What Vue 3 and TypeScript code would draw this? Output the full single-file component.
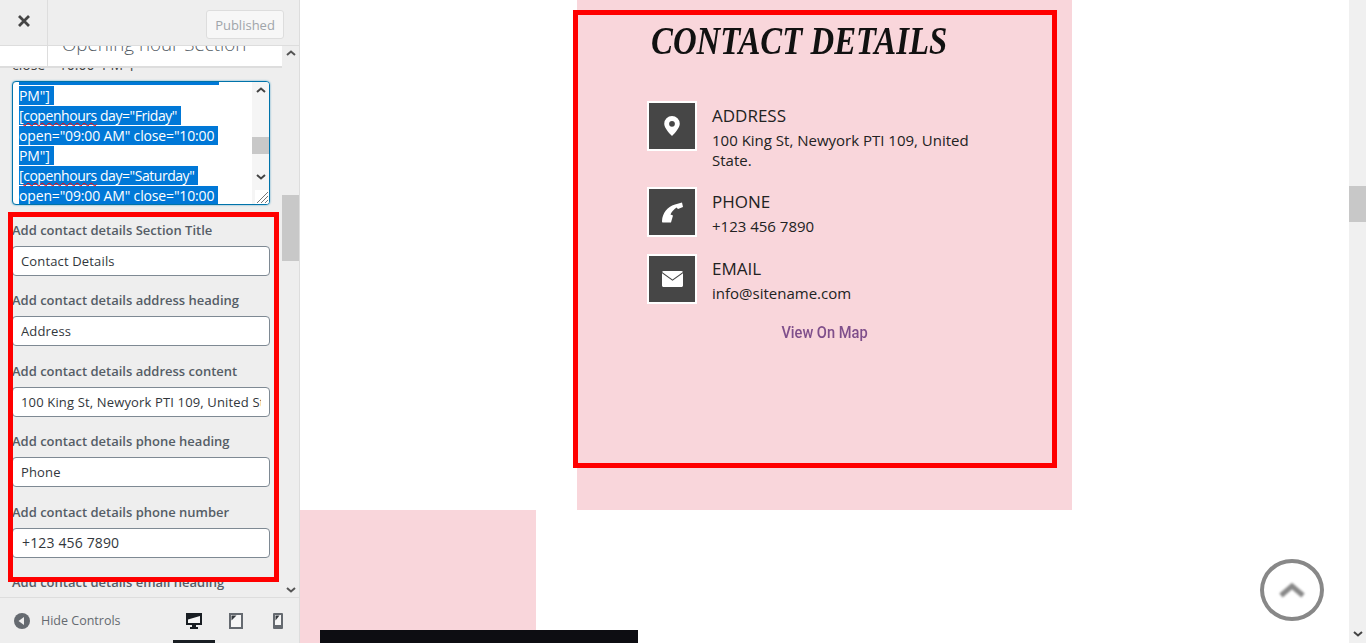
<template>
  <div class="page">
    <aside class="sidebar">
      <header class="side-head">
        <button class="close-btn" aria-label="Close">
          <svg width="12" height="12" viewBox="0 0 12 12"><path d="M1 1l10 10M11 1L1 11" stroke="#444" stroke-width="2.8" /></svg>
        </button>
        <span class="published">Published</span>
      </header>

      <div class="side-body">
        <div class="side-scroll">
          <div class="section-strip">
            <div class="strip-back"></div>
            <div class="strip-title"><span>Opening hour Section</span></div>
          </div>
          <div class="cut-line"><span>close="10:00 PM"]</span></div>

          <div class="code-box">
            <div class="code-text">
              <div class="code-inner">
                <span class="sel" :class="{ tagged: line.tag }" v-for="(line, i) in codeLines" :key="i"><template v-if="line.tag">[<u>copenhours</u></template>{{ line.text }}</span>
              </div>
            </div>
            <div class="code-bar">
              <svg class="arrow up" width="10" height="6" viewBox="0 0 10 6"><path d="M1 5l4-3.5L9 5" fill="none" stroke="#444" stroke-width="2" /></svg>
              <div class="code-thumb"></div>
              <svg class="arrow dn" width="10" height="6" viewBox="0 0 10 6"><path d="M1 1l4 3.5L9 1" fill="none" stroke="#444" stroke-width="2" /></svg>
            </div>
            <svg class="grip" width="14" height="14" viewBox="0 0 14 14"><path d="M13 2L2 13M13 6l-7 7M13 10l-3 3" stroke="#777" stroke-width="1" /></svg>
          </div>

          <div class="field" v-for="f in fields" :key="f.label">
            <label>{{ f.label }}</label>
            <div v-if="f.value" class="fake-input" :class="{ number: f.number }"><span>{{ f.value }}</span></div>
          </div>
        </div>

        <div class="side-bar">
          <svg width="10" height="6" viewBox="0 0 10 6"><path d="M1 5l4-3.5L9 5" fill="none" stroke="#555" stroke-width="2" /></svg>
          <div class="side-thumb"></div>
          <svg class="bar-down" width="10" height="6" viewBox="0 0 10 6"><path d="M1 1l4 3.5L9 1" fill="none" stroke="#555" stroke-width="2" /></svg>
        </div>
      </div>

      <footer class="side-foot">
        <svg width="16" height="16" viewBox="0 0 16 16"><circle cx="8" cy="8" r="8" fill="#656a70" /><path d="M10 4v8L4.500 8z" fill="#eee" /></svg>
        <span class="hide-text">Hide Controls</span>
        <div class="devices">
          <div class="device active">
            <svg width="16" height="16" viewBox="0 0 16 16"><path d="M0 0h16v12h-6v2h2v2H4v-2h2v-2H0z" fill="#191e23" /><path d="M2 10V6.500L14 3v7z" fill="#f6f6f6" /></svg>
          </div>
          <div class="device">
            <svg width="14" height="16" viewBox="0 0 14 16"><rect x="1" y="1" width="12" height="14" fill="#f6f6f6" stroke="#656a70" stroke-width="2" /><path d="M2.500 2.500h5l-5 5z" fill="#32373c" /></svg>
          </div>
          <div class="device">
            <svg width="10" height="16" viewBox="0 0 10 16"><rect width="10" height="16" rx="1" fill="#656a70" /><rect x="2" y="2" width="6" height="10" fill="#f6f6f6" /><path d="M2.500 2.500h4l-4 5z" fill="#32373c" /></svg>
          </div>
        </div>
        <div class="device-mark"></div>
      </footer>
    </aside>

    <main class="preview">
      <div class="preview-content">
        <section class="contact">
          <h2>CONTACT DETAILS</h2>
          <div class="item" v-for="c in contacts" :key="c.head">
            <div class="icon-box">
              <svg v-if="c.icon === 'pin'" width="16" height="20" viewBox="0 0 14 18"><path fill-rule="evenodd" d="M7 0a7 7 0 0 1 7 7c0 3.600-4.400 8.400-7 11-2.600-2.600-7-7.400-7-11a7 7 0 0 1 7-7zm0 4.400a2.600 2.600 0 1 0 0 5.200 2.600 2.600 0 0 0 0-5.200z" fill="#fff" /></svg>
              <svg v-else-if="c.icon === 'phone'" width="21" height="21" viewBox="0 0 21 21"><path d="M13 2.500L20 .5 21 5l-5 2-1.500-1.500C12 7 9.500 10 8.500 12.500l2.500 1-2 7H1C.3 20.500 0 20 0 19 .5 11 5 5 13 2.500z" fill="#fff" /></svg>
              <svg v-else width="21" height="16" viewBox="0 0 21 16"><path d="M1.500 0h18c.7 0 1.200.4 1.400 1L10.500 8.500.1 1C.3.400.8 0 1.500 0z" fill="#fff" /><path d="M0 2.200l10.500 7.500L21 2.200V14.500c0 .8-.7 1.500-1.500 1.500h-18C.7 16 0 15.300 0 14.500z" fill="#fff" /></svg>
            </div>
            <div class="item-text">
              <h3>{{ c.head }}</h3>
              <p>{{ c.body }}</p>
            </div>
          </div>
          <a class="map-link">View On Map</a>
        </section>

        <div class="lower">
          <div class="lower-pink">
            <div class="dark-block"></div>
          </div>
        </div>
      </div>

      <div class="page-bar">
        <div class="page-thumb"></div>
        <svg width="10" height="6" viewBox="0 0 10 6"><path d="M1 1l4 3.500L9 1" fill="none" stroke="#444" stroke-width="2" /></svg>
      </div>

      <div class="to-top">
        <svg width="28" height="18" viewBox="0 0 28 18"><path d="M3 14.500L14 5l11 9.500" fill="none" stroke="#888" stroke-width="5" /></svg>
      </div>
    </main>

    <div class="mark mark-side"></div>
    <div class="mark mark-main"></div>
  </div>
</template>

<script setup lang="ts">
interface Field {
  label: string
  value?: string
  number?: boolean
}

interface Contact {
  icon: 'pin' | 'phone' | 'mail'
  head: string
  body: string
}

const codeLines = [
  { tag: false, text: 'PM"]' },
  { tag: true, text: ' day="Friday"' },
  { tag: false, text: 'open="09:00 AM" close="10:00' },
  { tag: false, text: 'PM"]' },
  { tag: true, text: ' day="Saturday"' },
  { tag: false, text: 'open="09:00 AM" close="10:00' }
]

const fields: Field[] = [
  { label: 'Add contact details Section Title', value: 'Contact Details' },
  { label: 'Add contact details address heading', value: 'Address' },
  { label: 'Add contact details address content', value: '100 King St, Newyork PTI 109, United State.' },
  { label: 'Add contact details phone heading', value: 'Phone' },
  { label: 'Add contact details phone number', value: '+123 456 7890', number: true },
  { label: 'Add contact details email heading' }
]

const contacts: Contact[] = [
  { icon: 'pin', head: 'ADDRESS', body: '100 King St, Newyork PTI 109, United State.' },
  { icon: 'phone', head: 'PHONE', body: '+123 456 7890' },
  { icon: 'mail', head: 'EMAIL', body: 'info@sitename.com' }
]
</script>

<style>
html,
body {
  margin: 0;
  overflow: hidden;
}
</style>

<style scoped>
.page {
  position: relative;
  display: flex;
  width: 1366px;
  height: 643px;
  overflow: hidden;
  font-family: "Open Sans", sans-serif;
  background: #fff;
}

/* sidebar */
.sidebar {
  position: relative;
  display: flex;
  flex-direction: column;
  width: 300px;
  flex: none;
  background: #eee;
  box-sizing: border-box;
  border-right: 1px solid #ddd;
}
.side-head {
  display: flex;
  align-items: center;
  justify-content: space-between;
  height: 46px;
  flex: none;
  box-sizing: border-box;
  padding-right: 15px;
  border-bottom: 1px solid #ddd;
}
.close-btn {
  width: 48px;
  height: 45px;
  padding: 0;
  border: 0;
  border-right: 1px solid #ddd;
  background: none;
}
.published {
  box-sizing: border-box;
  width: 78px;
  height: 29px;
  margin-top: 3px;
  border: 1px solid #ddd;
  border-radius: 3px;
  background: #f7f7f7;
  color: #a0a5aa;
  font-size: 13px;
  line-height: 29px;
  text-align: center;
}
.side-body {
  display: flex;
  flex: 1;
  min-height: 0;
}
.side-scroll {
  width: 282px;
  flex: none;
  overflow: hidden;
}
.section-strip {
  display: flex;
  box-sizing: border-box;
  height: 22px;
  background: #fff;
  border-bottom: 2px solid #ddd;
}
.strip-back {
  width: 47px;
  flex: none;
  border-right: 1px solid #ddd;
}
.strip-title {
  padding-left: 14px;
  overflow: hidden;
  color: #555d66;
  font-size: 18.800px;
  font-weight: 300;
  line-height: 26px;
}
.strip-title span {
  display: block;
  margin-top: -15px;
}
.cut-line {
  height: 3px;
  overflow: hidden;
  padding-left: 12px;
  color: #444;
  font-size: 14px;
  line-height: 20px;
  word-spacing: 4px;
}
.cut-line span {
  display: block;
  margin-top: -13px;
}
.code-box {
  position: relative;
  display: flex;
  box-sizing: border-box;
  width: 258px;
  height: 124px;
  margin: 10px 0 15.900px 12px;
  border: 1px solid #0073aa;
  border-radius: 4px;
  background: #fff;
  overflow: hidden;
  box-shadow: 0 0 2px rgba(30, 140, 190, 0.8);
}
.code-text {
  flex: 1;
  overflow: hidden;
  padding-left: 6px;
}
.code-inner {
  position: relative;
  margin-top: 4px;
}
.code-inner::before {
  content: "";
  position: absolute;
  top: -4px;
  left: 0;
  width: 200px;
  height: 3px;
  background: #0078d7;
}
.sel {
  display: table;
  margin-bottom: 1px;
  padding-right: 4px;
  background: #0078d7;
  color: #fff;
  font-size: 14px;
  line-height: 19px;
  letter-spacing: -0.15px;
  white-space: pre;
}
.sel.tagged {
  letter-spacing: -0.45px;
}
.sel u {
  text-decoration: underline wavy #f00 1px;
  text-decoration-skip-ink: none;
  text-underline-offset: 1px;
}
.code-bar {
  position: relative;
  width: 17px;
  flex: none;
  background: #f5f5f5;
}
.arrow {
  position: absolute;
  left: 4px;
}
.arrow.up {
  top: 5px;
}
.arrow.dn {
  top: 92px;
}
.code-thumb {
  position: absolute;
  top: 55px;
  left: 0;
  width: 17px;
  height: 17px;
  background: #c8c8c8;
}
.grip {
  position: absolute;
  right: 0;
  bottom: 0;
  background: #fff;
}
.field {
  padding-left: 12px;
  margin-bottom: 15.500px;
}
.field label {
  display: block;
  height: 25px;
  color: #555d66;
  font-size: 13px;
  font-weight: 600;
  line-height: 19px;
}
.fake-input {
  box-sizing: border-box;
  width: 258px;
  height: 30px;
  padding: 0 8px;
  overflow: hidden;
  border: 1px solid #7e8993;
  border-radius: 4px;
  background: #fff;
  color: #32373c;
  font-size: 13px;
  line-height: 28px;
  letter-spacing: 0.15px;
  white-space: nowrap;
}
.fake-input.number {
  padding-left: 9px;
  font-size: 14px;
}
.fake-input span {
  display: block;
  overflow: hidden;
}
.side-bar {
  position: relative;
  display: flex;
  flex-direction: column;
  align-items: center;
  flex: 1;
  padding-top: 4px;
  background: #eee;
}
.side-thumb {
  position: absolute;
  top: 149px;
  left: 0;
  width: 17px;
  height: 66px;
  background: #c8c8c8;
}
.bar-down {
  margin-top: auto;
  margin-bottom: 4px;
}
.side-foot {
  position: relative;
  display: flex;
  align-items: center;
  flex: none;
  height: 46px;
  box-sizing: border-box;
  padding-left: 14px;
  border-top: 1px solid #ddd;
  background: #eee;
}
.hide-text {
  margin-left: 11px;
  color: #656a70;
  font-size: 12.500px;
}
.devices {
  position: absolute;
  top: 15px;
  left: 173px;
  display: flex;
}
.device {
  display: flex;
  justify-content: center;
  width: 42px;
}
.device-mark {
  position: absolute;
  bottom: 0;
  left: 173px;
  width: 42px;
  height: 3px;
  background: #191e23;
}

/* preview */
.preview {
  position: relative;
  display: flex;
  flex: 1;
  min-width: 0;
}
.preview-content {
  flex: 1;
  min-width: 0;
}
.contact {
  box-sizing: border-box;
  width: 495px;
  height: 510px;
  margin-left: 277px;
  padding: 17px 70px 0;
  background: #f9d6db;
  color: #222;
}
.contact h2 {
  margin: 0 0 37px 4px;
  color: #111;
  font-family: "Liberation Serif", serif;
  font-size: 41px;
  font-style: italic;
  font-weight: 700;
  line-height: 47px;
  white-space: nowrap;
  transform: scaleX(0.8);
  transform-origin: left center;
}
.item {
  display: flex;
  gap: 15px;
  margin-bottom: 17px;
}
.icon-box {
  display: flex;
  align-items: center;
  justify-content: center;
  box-sizing: border-box;
  width: 50px;
  height: 50px;
  flex: none;
  border: 2px solid #fff;
  background: #464646;
}
.item-text {
  width: 270px;
}
.item-text h3 {
  margin: 3px 0 0;
  font-size: 17px;
  font-weight: 400;
  line-height: 24px;
}
.item-text p {
  margin: 2px 0 0;
  font-size: 15px;
  line-height: 20px;
}
.map-link {
  display: block;
  margin-top: 14px;
  color: #7f4f8b;
  font-family: Roboto, sans-serif;
  font-size: 17px;
  font-weight: 500;
  line-height: 22px;
  text-align: center;
  transform: scaleX(0.86);
}
.lower {
  height: 133px;
}
.lower-pink {
  width: 236px;
  height: 133px;
  padding-top: 120px;
  box-sizing: border-box;
  background: #f9d6db;
}
.dark-block {
  width: 318px;
  height: 13px;
  margin-left: 20px;
  background: #0d0d12;
}
.page-bar {
  position: relative;
  display: flex;
  justify-content: center;
  width: 17px;
  flex: none;
  background: #f0f0f0;
}
.page-bar svg {
  position: absolute;
  top: 631px;
}
.page-thumb {
  position: absolute;
  top: 186px;
  left: 0;
  width: 17px;
  height: 36px;
  background: #c8c8c8;
}
.to-top {
  position: absolute;
  top: 559px;
  left: 960px;
  display: flex;
  align-items: center;
  justify-content: center;
  box-sizing: border-box;
  width: 64px;
  height: 62px;
  border: 4px solid #888;
  border-radius: 50%;
  background: #fff;
}
.to-top svg {
  filter: blur(1px);
}

/* red annotation frames drawn over the screenshot */
.mark {
  position: absolute;
  box-sizing: border-box;
  border: 5px solid #f00;
  pointer-events: none;
}
.mark-side {
  top: 212px;
  left: 8px;
  width: 271px;
  height: 370px;
}
.mark-main {
  top: 10px;
  left: 573px;
  width: 484px;
  height: 458px;
}
</style>
